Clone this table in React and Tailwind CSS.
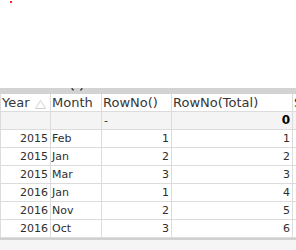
export default function App() {
  const rows = [
    ["2015", "Feb", "1", "1"],
    ["2015", "Jan", "2", "2"],
    ["2015", "Mar", "3", "3"],
    ["2016", "Jan", "1", "4"],
    ["2016", "Nov", "2", "5"],
    ["2016", "Oct", "3", "6"],
  ];
  const font = { fontFamily: "'DejaVu Sans', Verdana, sans-serif" };
  return (
    <div className="relative w-[296px] h-[250px] overflow-hidden bg-white text-[#2e2e2e]" style={font}>
      <div className="absolute left-[10px] top-[1px] w-[2px] h-[2px] bg-[#ff2020]" />
      <div className="h-[88px]" />
      <div className="relative h-[6px] bg-[#d3d3d3]">
        <svg width="12" height="3" viewBox="0 0 12 3" className="absolute left-[71px] top-0">
          <path d="M1 0 Q1 2 3 2" fill="none" stroke="#3a3a3a" strokeWidth="1.2" />
          <path d="M11 0 Q11 2 9 2" fill="none" stroke="#3a3a3a" strokeWidth="1.2" />
        </svg>
      </div>
      {/* header */}
      <div className="flex h-[18px] border-b border-[#dcdcdc] bg-white text-[13px] leading-[17px] text-[#363636]">
        <div className="w-[51px] shrink-0 border-l border-r border-[#dcdcdc] pl-[1px] flex items-center">
          <span>Year</span>
          <svg width="11" height="9" viewBox="0 0 11 9" className="ml-[5px] mt-[3px]">
            <path d="M0.5 8.5 L5.5 0.5 L10.5 8.5 Z" fill="none" stroke="#d0d0d0" strokeWidth="1" />
          </svg>
        </div>
        <div className="w-[51px] shrink-0 border-r border-[#dcdcdc] pl-[1px]">Month</div>
        <div className="w-[70px] shrink-0 border-r border-[#dcdcdc] pl-[1px]">RowNo()</div>
        <div className="w-[121px] shrink-0 border-r border-[#dcdcdc] pl-[1px]">RowNo(Total)</div>
        <div className="flex-1 pl-[1px] whitespace-nowrap overflow-hidden">Sum</div>
      </div>
      {/* total row */}
      <div className="flex h-[18px] border-b border-[#dcdcdc] bg-[#f4f4f4] text-[11px] leading-[17px]">
        <div className="w-[51px] shrink-0 border-l border-r border-[#dcdcdc]" />
        <div className="w-[51px] shrink-0 border-r border-[#dcdcdc]" />
        <div className="w-[70px] shrink-0 border-r border-[#dcdcdc] pl-[2px]">-</div>
        <div className="w-[121px] shrink-0 border-r border-[#dcdcdc] pr-[2px] text-right font-bold text-[12px] text-black">0</div>
        <div className="flex-1" />
      </div>
      {rows.map((r, i) => (
        <div key={i} className="flex h-[18px] border-b border-[#dcdcdc] bg-white text-[11px] leading-[17px]">
          <div className="w-[51px] shrink-0 border-l border-r border-[#dcdcdc] pr-[2px] text-right">{r[0]}</div>
          <div className="w-[51px] shrink-0 border-r border-[#dcdcdc] pl-[1px]">{r[1]}</div>
          <div className="w-[70px] shrink-0 border-r border-[#dcdcdc] pr-[2px] text-right">{r[2]}</div>
          <div className="w-[121px] shrink-0 border-r border-[#dcdcdc] pr-[2px] text-right">{r[3]}</div>
          <div className="flex-1" />
        </div>
      ))}
      <div className="h-[20px] border-t-2 border-[#d0d0d0] bg-[#f5f5f5]" />
    </div>
  );
}
